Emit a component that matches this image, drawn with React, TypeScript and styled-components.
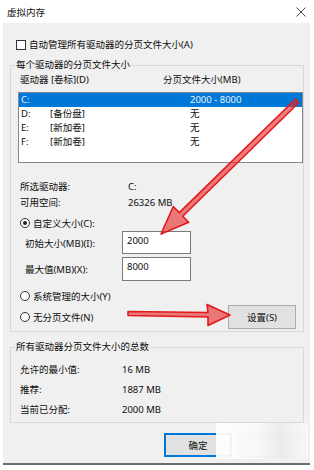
import React from 'react';
import styled, { createGlobalStyle } from 'styled-components';

const colors = {
  face: '#f0f0f0',
  text: '#0d0d0d',
  groupLine: '#d9d9d9',
  blue: '#0078d7',
  button: '#e1e1e1',
  buttonBorder: '#adadad',
  arrow: '#e3191c',
};

const GlobalStyle = createGlobalStyle`
  html, body {
    margin: 0;
    padding: 0;
    background: #ffffff;
  }
  body {
    font-family: "Noto Sans", "Noto Sans CJK SC", sans-serif;
    font-size: 9.5px;
    color: ${colors.text};
  }
`;

const Window = styled.div`
  position: relative;
  width: 314px;
  height: 470px;
  background: #ffffff;
  display: flex;
  flex-direction: column;
  overflow: hidden;
`;

const TitleBar = styled.div`
  height: 23px;
  flex: none;
  display: flex;
  align-items: center;
  justify-content: space-between;
  padding: 0 8px 0 7px;
  font-size: 9.5px;
  color: #111;
`;

const Body = styled.div`
  height: 442px;
  box-sizing: border-box;
  margin: 0 4px 0 3px;
  padding: 0 6px 0 7px;
  background: ${colors.face};
  border-bottom: 2px solid #6e6e6e;
  display: flex;
  flex-direction: column;
`;

const CheckRow = styled.label`
  display: flex;
  align-items: center;
  gap: 3px;
  height: 12px;
  line-height: 12px;
  margin-top: 16px;
  padding-left: 6px;
`;

const CheckBox = styled.span`
  width: 10px;
  height: 10px;
  box-sizing: border-box;
  border: 1px solid #333;
  background: #fff;
`;

const Group = styled.fieldset<{ $top: number; $bottom: number }>`
  margin: ${(p) => p.$top}px 0 0 0;
  padding: 0 0 ${(p) => p.$bottom}px 9px;
  border: 1px solid ${colors.groupLine};
  min-width: 0;
`;

const Legend = styled.legend`
  padding: 0 1px;
  margin-left: -5px;
  line-height: 12px;
  font-size: 9.5px;
`;

const HeaderRow = styled.div`
  display: grid;
  grid-template-columns: 143px 1fr;
  line-height: 12px;
  margin-top: 3px;
`;

const ListBox = styled.div`
  margin: 6px 0 0 -2px;
  height: 71px;
  box-sizing: border-box;
  border: 1px solid #828790;
  background: #fff;
`;

const ListRow = styled.div<{ $selected?: boolean }>`
  display: grid;
  grid-template-columns: 29px 140px 1fr;
  height: 14px;
  line-height: 13px;
  padding-left: 2px;
  background: ${(p) => (p.$selected ? colors.blue : 'transparent')};
  color: ${(p) => (p.$selected ? '#e8f2fb' : colors.text)};
`;

const InfoGrid = styled.div<{ $label: number; $row: number; $top: number }>`
  display: grid;
  grid-template-columns: ${(p) => p.$label}px 1fr;
  grid-auto-rows: ${(p) => p.$row}px;
  align-items: center;
  margin-top: ${(p) => p.$top}px;
`;

const RadioRow = styled.div<{ $top: number }>`
  display: flex;
  align-items: center;
  gap: 3px;
  height: 12px;
  margin-top: ${(p) => p.$top}px;
`;

const Radio = styled.span<{ $checked?: boolean }>`
  position: relative;
  width: 10px;
  height: 10px;
  box-sizing: border-box;
  border: 1px solid #333;
  border-radius: 50%;
  background: #fff;
  &::after {
    content: '';
    display: ${(p) => (p.$checked ? 'block' : 'none')};
    position: absolute;
    left: 2px;
    top: 2px;
    width: 4px;
    height: 4px;
    border-radius: 50%;
    background: #222;
  }
`;

const FieldRow = styled.div<{ $top: number; $height: number }>`
  display: grid;
  grid-template-columns: 97px 69px;
  align-items: center;
  height: ${(p) => p.$height}px;
  margin-top: ${(p) => p.$top}px;
  padding-left: 5px;
`;

const TextBox = styled.div`
  height: 100%;
  box-sizing: border-box;
  border: 1px solid #7a7a7a;
  background: #fff;
  padding: 3px 0 0 4px;
  line-height: 12px;
`;

const SetRow = styled.div`
  display: flex;
  align-items: center;
  justify-content: space-between;
  height: 23px;
  margin-top: 3px;
  padding-right: 7px;
`;

const RadioLabel = styled.div`
  display: flex;
  align-items: center;
  gap: 3px;
`;

const Button = styled.div<{ $default?: boolean }>`
  width: 68px;
  height: 24px;
  box-sizing: border-box;
  display: flex;
  align-items: center;
  justify-content: center;
  background: ${colors.button};
  border: 1px solid ${(p) => (p.$default ? colors.blue : colors.buttonBorder)};
  box-shadow: ${(p) => (p.$default ? `inset 0 0 0 1px ${colors.blue}` : 'none')};
  font-size: 9.5px;
`;

const Footer = styled.div`
  display: flex;
  justify-content: flex-end;
  gap: 6px;
  margin: 10px -2px 0 0;
`;

const Watermark = styled.div`
  position: absolute;
  left: 216px;
  top: 423px;
  width: 92px;
  height: 36px;
  background: linear-gradient(90deg, rgba(255, 255, 255, 0.95) 0%, rgba(250, 250, 250, 0.9) 45%, rgba(236, 236, 236, 0.92) 70%, rgba(250, 250, 250, 0.9) 100%);
`;

const Arrows = styled.svg`
  position: absolute;
  left: 0;
  top: 0;
  pointer-events: none;
`;

function CloseIcon() {
  return (
    <svg width="10" height="10" viewBox="0 0 10 10">
      <path d="M0.5 0.5 L9.5 9.5 M9.5 0.5 L0.5 9.5" stroke="#333" strokeWidth="0.9" fill="none" />
    </svg>
  );
}

const drives = [
  { id: 'C:', label: '', size: '2000 - 8000', selected: true },
  { id: 'D:', label: '[备份盘]', size: '无' },
  { id: 'E:', label: '[新加卷]', size: '无' },
  { id: 'F:', label: '[新加卷]', size: '无' },
];

export default function App() {
  return (
    <>
      <GlobalStyle />
      <Window>
        <TitleBar>
          <span>虚拟内存</span>
          <CloseIcon />
        </TitleBar>
        <Body>
          <CheckRow>
            <CheckBox />
            <span>自动管理所有驱动器的分页文件大小(A)</span>
          </CheckRow>

          <Group $top={8} $bottom={3}>
            <Legend>每个驱动器的分页文件大小</Legend>
            <HeaderRow>
              <span>驱动器 [卷标](D)</span>
              <span>分页文件大小(MB)</span>
            </HeaderRow>
            <ListBox>
              {drives.map((d) => (
                <ListRow key={d.id} $selected={d.selected}>
                  <span>{d.id}</span>
                  <span>{d.label}</span>
                  <span>{d.size}</span>
                </ListRow>
              ))}
            </ListBox>
            <InfoGrid $label={108} $row={16} $top={15}>
              <span>所选驱动器:</span>
              <span>C:</span>
              <span>可用空间:</span>
              <span>26326 MB</span>
            </InfoGrid>
            <RadioRow $top={7}>
              <Radio $checked />
              <span>自定义大小(C):</span>
            </RadioRow>
            <FieldRow $top={2} $height={23}>
              <span>初始大小(MB)(I):</span>
              <TextBox>2000</TextBox>
            </FieldRow>
            <FieldRow $top={3} $height={24}>
              <span>最大值(MB)(X):</span>
              <TextBox>8000</TextBox>
            </FieldRow>
            <RadioRow $top={9}>
              <Radio />
              <span>系统管理的大小(Y)</span>
            </RadioRow>
            <SetRow>
              <RadioLabel>
                <Radio />
                <span>无分页文件(N)</span>
              </RadioLabel>
              <Button>设置(S)</Button>
            </SetRow>
          </Group>

          <Group $top={9} $bottom={3}>
            <Legend>所有驱动器分页文件大小的总数</Legend>
            <InfoGrid $label={102} $row={20} $top={6}>
              <span>允许的最小值:</span>
              <span>16 MB</span>
              <span>推荐:</span>
              <span>1887 MB</span>
              <span>当前已分配:</span>
              <span>2000 MB</span>
            </InfoGrid>
          </Group>

          <Footer>
            <Button $default>确定</Button>
            <Button />
          </Footer>
        </Body>

        <Watermark />

        <Arrows width="314" height="470" viewBox="0 0 314 470">
          <polygon
            points="298.7,102.8 182.7,216.2 188.7,222.3 161,234 173.3,206.5 179.3,212.6 295.3,99.2"
            fill="rgba(232,40,40,0.6)"
            stroke={colors.arrow}
            strokeWidth="1.6"
            strokeLinejoin="round"
          />
          <polygon
            points="128,311.5 208,312.5 207,304.5 230,315 208,325.5 208,317 128,315.5"
            fill="rgba(232,40,40,0.6)"
            stroke={colors.arrow}
            strokeWidth="1.6"
            strokeLinejoin="round"
          />
        </Arrows>
      </Window>
    </>
  );
}
